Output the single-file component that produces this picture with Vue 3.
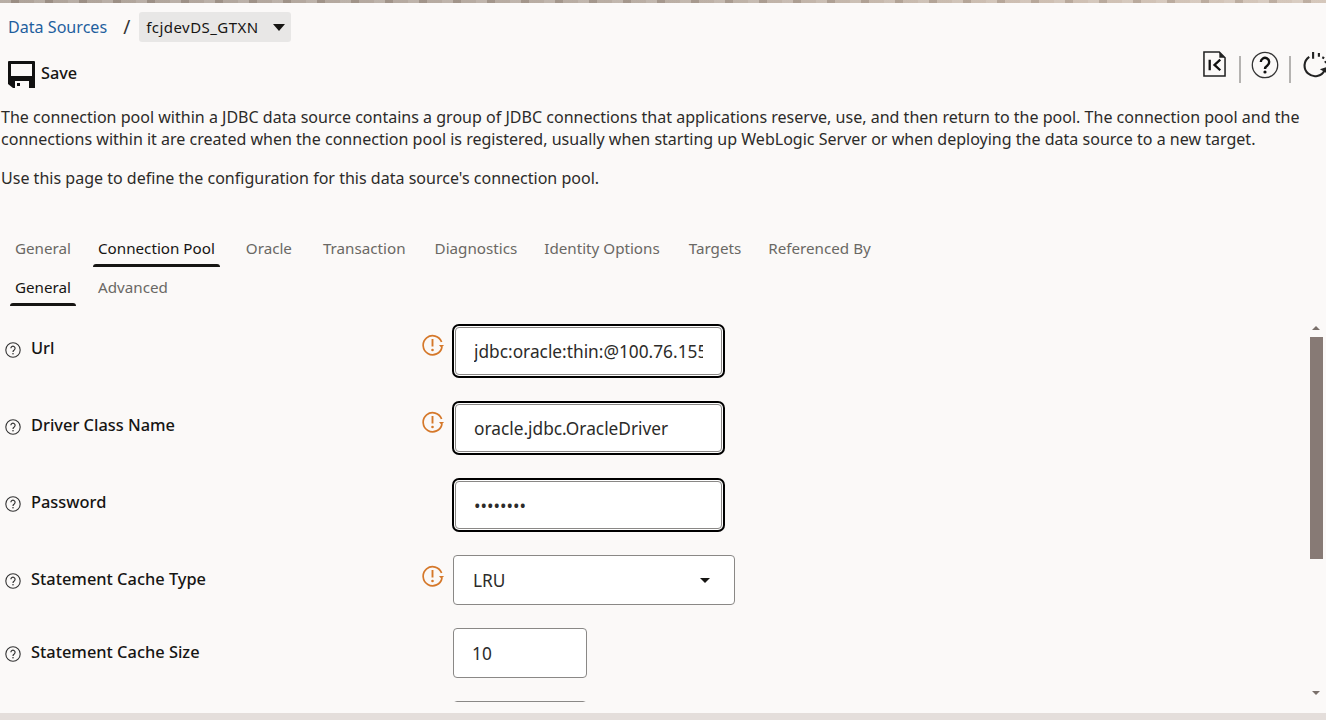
<script setup>
const TABS = ['General', 'Connection Pool', 'Oracle', 'Transaction', 'Diagnostics', 'Identity Options', 'Targets', 'Referenced By']
const SUB_TABS = ['General', 'Advanced']

const FIELDS = [
   { label: 'Url', value: 'jdbc:oracle:thin:@100.76.155', restart: true, focus: true },
   { label: 'Driver Class Name', value: 'oracle.jdbc.OracleDriver', restart: true, focus: true },
   { label: 'Password', value: 'password', type: 'password', focus: true },
   { label: 'Statement Cache Type', value: 'LRU', restart: true, select: true },
   { label: 'Statement Cache Size', value: '10', size: 'small' },
   { label: '', value: '', size: 'small' },
]
</script>

<template>
   <div class="page">
      <div class="top-strip"></div>

      <div class="crumbs">
         <a class="crumb-link">Data Sources</a>
         <span class="crumb-sep">/</span>
         <div class="crumb-current">
            <span>fcjdevDS_GTXN</span>
            <span class="crumb-caret"></span>
         </div>
      </div>

      <div class="toolbar">
         <button class="save-btn">
            <svg class="save-icon" viewBox="0 0 27 27">
               <path fill="#111" fill-rule="evenodd" d="M0 1a1 1 0 0 1 1-1h25a1 1 0 0 1 1 1v26H5l-5-4zM3 3v12h21V3zM7 20v7h14v-7zM9 22h3v3H9z" />
            </svg>
            <span class="save-text">Save</span>
         </button>
         <div class="tool-icons">
            <svg class="tool-doc" viewBox="0 0 24 27">
               <path fill="none" stroke="#222" stroke-width="1.6" d="M1 1h16l6 6v19H1z" />
               <path fill="#222" d="M17 1l6 6h-6z" />
               <path fill="none" stroke="#111" stroke-width="2.4" d="M7 9v11M18 9l-6 5.500 6 5.500" />
            </svg>
            <span class="tool-sep"></span>
            <svg class="tool-help" viewBox="0 0 28 28">
               <circle cx="14" cy="14" r="12.700" fill="none" stroke="#333" stroke-width="1.300" />
               <path fill="none" stroke="#111" stroke-width="2.400" d="M9.800 11a4.200 4.200 0 1 1 6.600 3.500c-1.500 1-2.400 1.800-2.400 3.500" />
               <circle cx="14" cy="21" r="1.600" fill="#111" />
            </svg>
            <span class="tool-sep"></span>
            <svg class="tool-refresh" viewBox="0 0 30 28">
               <path fill="none" stroke="#222" stroke-width="2.200" d="M8 6a11 11 0 1 0 16 14" />
               <path fill="none" stroke="#222" stroke-width="2.200" d="M12 1v7M18 2v4M23 6l-1 2M26 11l-2 1" />
               <path fill="#222" d="M19 19l9-3v8z" />
            </svg>
         </div>
      </div>

      <p class="intro">The connection pool within a JDBC data source contains a group of JDBC connections that applications reserve, use, and then return to the pool. The connection pool and the connections within it are created when the connection pool is registered, usually when starting up WebLogic Server or when deploying the data source to a new target.</p>
      <p class="intro intro-second">Use this page to define the configuration for this data source's connection pool.</p>

      <div class="tabs main-tabs">
         <div v-for="t in TABS" :key="t" class="tab" :class="{ active: t === 'Connection Pool' }">{{ t }}</div>
      </div>
      <div class="tabs sub-tabs">
         <div v-for="t in SUB_TABS" :key="t" class="tab" :class="{ active: t === 'General' }">{{ t }}</div>
      </div>

      <div class="form-area">
         <div class="form">
            <div v-for="(f, i) in FIELDS" :key="i" class="row">
               <div class="label-cell">
                  <template v-if="f.label">
                     <svg class="help-icon" viewBox="0 0 16 16">
                        <circle cx="8" cy="8" r="7.200" fill="none" stroke="#333" stroke-width="1.100" />
                        <path fill="none" stroke="#333" stroke-width="1.200" d="M5.900 6.300a2.100 2.100 0 1 1 3.300 1.700c-.8.500-1.200 1-1.200 1.900" />
                        <circle cx="8" cy="11.800" r=".8" fill="#333" />
                     </svg>
                     <label class="field-label">{{ f.label }}</label>
                  </template>
               </div>
               <div class="flag-cell">
                  <svg v-if="f.restart" class="restart-icon" viewBox="0 0 22 22">
                     <path fill="none" stroke="#d5782a" stroke-width="1.700" d="M20 13a9.500 9.500 0 1 1-.4-5" />
                     <path fill="#d5782a" d="M17 11h5l-2.500 3z" />
                     <path fill="none" stroke="#d5782a" stroke-width="1.900" d="M10.500 5v7.500" />
                     <circle cx="10.500" cy="16" r="1.300" fill="#d5782a" />
                  </svg>
               </div>
               <div v-if="f.select" class="field select-field">
                  <span>{{ f.value }}</span>
                  <span class="select-caret"></span>
               </div>
               <input
                  v-else
                  class="field"
                  :class="[f.size, { focused: f.focus }]"
                  :type="f.type || 'text'"
                  :value="f.value"
                  readonly
               />
            </div>
         </div>
         <div class="scrollbar">
            <span class="arrow-up"></span>
            <div class="thumb"></div>
            <div class="track"></div>
            <span class="arrow-down"></span>
         </div>
      </div>

      <div class="bottom-bar"></div>
   </div>
</template>

<style>
html, body {
   margin: 0;
   overflow: hidden;
   background: #fbf9f8;
}
</style>

<style scoped>
.page {
   width: 1326px;
   height: 720px;
   display: flex;
   flex-direction: column;
   overflow: hidden;
   background: #fbf9f8;
   color: #161513;
   font-family: "Noto Sans", "Open Sans", sans-serif;
   font-size: 16px;
}

/* mottled banner edge showing above the page */
.top-strip {
   height: 3px;
   flex-shrink: 0;
   background:
      repeating-linear-gradient(90deg, rgba(255, 255, 255, 0.18) 0 11px, rgba(70, 55, 45, 0.14) 11px 19px, rgba(255, 255, 255, 0.08) 19px 34px),
      linear-gradient(90deg, #a89c92 0%, #b5a89d 50%, #c9b9ab 75%, #d2c3b6 100%);
}

/* ── Breadcrumbs ── */
.crumbs {
   display: flex;
   align-items: center;
   height: 30px;
   margin-top: 9px;
   padding-left: 8px;
}

.crumb-link {
   color: #1f5f9e;
   font-size: 16.100px;
}

.crumb-sep {
   margin: 0 9px 0 16px;
   font-size: 19px;
   color: #333;
}

.crumb-current {
   display: flex;
   align-items: center;
   gap: 14px;
   height: 30px;
   padding: 0 6px 0 7px;
   border-radius: 3px;
   background: #e8e7e6;
   font-size: 15px;
   letter-spacing: 0.450px;
}

.crumb-caret {
   width: 0;
   height: 0;
   border-left: 6.500px solid transparent;
   border-right: 6.500px solid transparent;
   border-top: 7px solid #161513;
}

/* ── Toolbar ── */
.toolbar {
   display: flex;
   justify-content: space-between;
   height: 55px;
}

.save-btn {
   display: flex;
   align-items: center;
   gap: 6px;
   height: 27px;
   margin: 19px 0 0 8px;
   padding: 0;
   border: none;
   background: none;
   color: #161513;
   font: 500 16.300px "Noto Sans", sans-serif;
}

.save-text {
   margin-top: -4px;
}

.save-icon {
   width: 27px;
   height: 27px;
}

.tool-icons {
   display: flex;
   align-items: flex-start;
   margin-top: 9px;
   margin-right: -5px;
}

.tool-doc {
   width: 23px;
   height: 26px;
   margin-right: 13px;
}

.tool-sep {
   width: 2px;
   height: 27px;
   margin-top: 5px;
   background: #b5b3b1;
}

.tool-help {
   width: 28px;
   height: 28px;
   margin: 0 10px;
}

.tool-refresh {
   width: 30px;
   height: 27px;
   margin-left: 10px;
}

/* ── Intro text ── */
.intro {
   margin: 9px 0 0 1px;
   font-size: 16.050px;
   line-height: 22px;
   color: #2c2b29;
}

.intro-second {
   margin-top: 17px;
}

/* ── Tabs ── */
.tabs {
   display: flex;
   gap: 17px;
   height: 39px;
   margin-top: 39px;
   padding-left: 10px;
}

.sub-tabs {
   margin-top: 0;
   height: 39px;
}

.tab {
   position: relative;
   padding: 10px 5px 0;
   font-size: 15.200px;
   line-height: 20px;
   color: #6a6864;
}

.main-tabs .tab:nth-child(3),
.main-tabs .tab:nth-child(4) {
   margin-left: 4px;
}

.main-tabs .tab:nth-child(5),
.main-tabs .tab:nth-child(7) {
   margin-left: 2px;
}

.tab.active {
   color: #161513;
}

.tab.active::after {
   content: '';
   position: absolute;
   left: 0;
   right: 0;
   bottom: 0;
   height: 3px;
   border-radius: 3px 3px 0 0;
   background: #161513;
}

/* ── Form ── */
.form-area {
   display: flex;
   height: 382px;
   margin-top: 14px;
   overflow: hidden;
}

.form {
   flex: 1;
   display: flex;
   flex-direction: column;
   gap: 23px;
   padding-top: 4px;
   overflow: hidden;
}

.row {
   display: flex;
   align-items: flex-start;
   flex-shrink: 0;
}

.label-cell {
   display: flex;
   align-items: center;
   gap: 10px;
   width: 421px;
   padding: 13px 0 0 5px;
   box-sizing: border-box;
}

.help-icon {
   width: 16px;
   height: 16px;
   flex-shrink: 0;
   margin-top: 3px;
}

.field-label {
   font-size: 16.400px;
   font-weight: 500;
   line-height: 22px;
}

.flag-cell {
   width: 32px;
   padding: 10px 0 0 1px;
   box-sizing: border-box;
}

.restart-icon {
   width: 22px;
   height: 22px;
   display: block;
}

.field {
   display: block;
   width: 282px;
   height: 50px;
   box-sizing: border-box;
   padding: 0 18px;
   border: 1px solid #8a8886;
   border-radius: 4px;
   background: #fff;
   color: #2c2b29;
   font: 17.300px "Noto Sans", sans-serif;
   outline: none;
}

.field.focused {
   width: 267px;
   height: 48px;
   margin: 3px 0 3px 2px;
   box-shadow: 0 0 0 1px #fff, 0 0 0 3px #000;
}

.field.small {
   width: 134px;
}

.select-field {
   display: flex;
   align-items: center;
   justify-content: space-between;
   padding: 0 24px 0 19px;
}

.select-caret {
   width: 0;
   height: 0;
   border-left: 5.500px solid transparent;
   border-right: 5.500px solid transparent;
   border-top: 5px solid #161513;
}

/* ── Scrollbar ── */
.scrollbar {
   width: 16px;
   display: flex;
   flex-direction: column;
   align-items: center;
   margin-right: 2px;
   padding-top: 3px;
   padding-bottom: 7px;
   box-sizing: border-box;
}

.arrow-up {
   width: 0;
   height: 0;
   border-left: 4px solid transparent;
   border-right: 4px solid transparent;
   border-bottom: 4px solid #7a706b;
   margin: 3px 0 7px;
}

.thumb {
   width: 13px;
   height: 222px;
   background: #877a75;
}

.track {
   flex: 1;
}

.arrow-down {
   width: 0;
   height: 0;
   border-left: 4px solid transparent;
   border-right: 4px solid transparent;
   border-top: 4px solid #7a706b;
}

.bottom-bar {
   flex: 1;
   margin-top: 11px;
   background: #e4dedb;
}
</style>
